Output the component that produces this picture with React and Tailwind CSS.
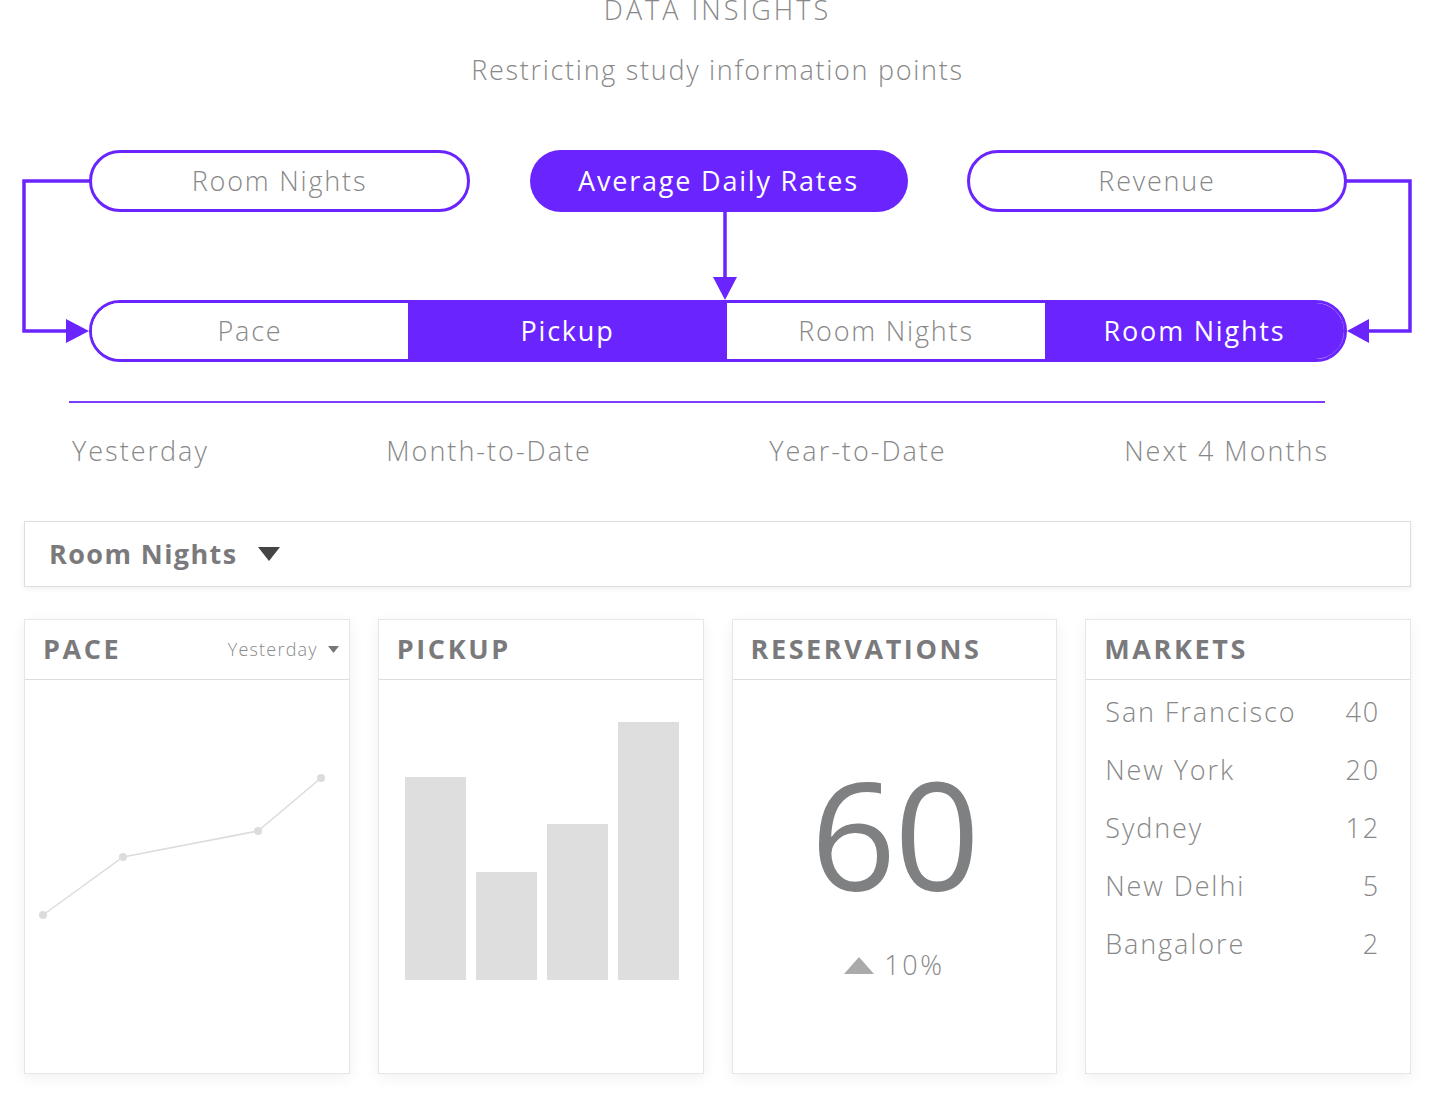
import React from 'react';

const PURPLE = '#6a24fe';

const markets = [
  { name: 'San Francisco', value: 40 },
  { name: 'New York', value: 20 },
  { name: 'Sydney', value: 12 },
  { name: 'New Delhi', value: 5 },
  { name: 'Bangalore', value: 2 },
];

const bars = [
  { h: 203 },
  { h: 108 },
  { h: 156 },
  { h: 258 },
];

const Card = ({ title, right, children }) => (
  <div className="h-[455px] bg-white border border-[#e6e6ea] shadow-[0_4px_14px_rgba(0,0,0,0.06)] flex flex-col">
    <div className="h-[60px] shrink-0 border-b border-[#dcdce0] flex items-center justify-between pl-[18px] pr-[10px]">
      <span className="text-[27px] font-bold tracking-[2.6px] text-[#7a7a7c]">{title}</span>
      {right}
    </div>
    <div className="flex-1 relative">{children}</div>
  </div>
);

export default function App() {
  return (
    <div
      className="relative w-[1435px] h-[1100px] overflow-hidden bg-white text-[#888888]"
      style={{ fontFamily: '"Open Sans", Lato, sans-serif' }}
    >
      {/* En-tête */}
      <div className="flex flex-col items-center -mt-[8px]">
        <h1 className="text-[27px] font-light leading-[36px] tracking-[3px]">DATA INSIGHTS</h1>
        <p className="mt-[24px] text-[27px] font-light leading-[36px] tracking-[1.7px]">Restricting study information points</p>
      </div>

      {/* Diagramme */}
      <div className="relative mt-[60px] h-[218px]">
        <svg className="absolute inset-0" width="1435" height="218" viewBox="0 0 1435 218">
          <g fill="none" stroke={PURPLE} strokeWidth="3.5">
            <polyline points="90,33 24,33 24,183 70,183" />
            <line x1="725" y1="64" x2="725" y2="132" />
            <polyline points="1346,33 1410,33 1410,183 1366,183" />
          </g>
          <polygon points="66,171 66,195 89,183" fill={PURPLE} />
          <polygon points="713,129 737,129 725,152" fill={PURPLE} />
          <polygon points="1369,171 1369,195 1347,183" fill={PURPLE} />
        </svg>

        <div className="relative flex justify-between pl-[89px] pr-[88px] pt-[2px] tracking-[1.8px]">
          <div className="w-[381px] h-[62px] rounded-full border-[3.5px] border-[#6a24fe] bg-white flex items-center justify-center text-[27px] font-light text-[#888]">
            Room Nights
          </div>
          <div className="w-[378px] h-[62px] rounded-full bg-[#6a24fe] flex items-center justify-center text-[27px] font-normal text-white">
            Average Daily Rates
          </div>
          <div className="w-[380px] h-[62px] rounded-full border-[3.5px] border-[#6a24fe] bg-white flex items-center justify-center text-[27px] font-light text-[#888]">
            Revenue
          </div>
        </div>

        <div className="relative ml-[89px] mt-[88px] w-[1258px] h-[62px] rounded-full border-[3.5px] border-[#6a24fe] overflow-hidden grid grid-cols-[316px_319px_318px_1fr] text-[27px] tracking-[1.8px]">
          <div className="bg-white flex items-center justify-center font-light text-[#888]">Pace</div>
          <div className="bg-[#6a24fe] flex items-center justify-center text-white">Pickup</div>
          <div className="bg-white flex items-center justify-center font-light text-[#888]">Room Nights</div>
          <div className="bg-[#6a24fe] flex items-center justify-center text-white">Room Nights</div>
        </div>
      </div>

      {/* Périodes */}
      <div className="ml-[69px] mt-[35px] w-[1256px] h-[2px] bg-[#7b3cff]" />
      <div className="flex justify-between pl-[72px] pr-[106px] mt-[30px] text-[27px] font-light leading-[36px] tracking-[2px]">
        <span>Yesterday</span>
        <span>Month-to-Date</span>
        <span>Year-to-Date</span>
        <span>Next 4 Months</span>
      </div>

      {/* Sélecteur */}
      <div className="mx-[24px] mt-[52px] h-[66px] border border-[#dedee2] shadow-[0_2px_6px_rgba(0,0,0,0.06)] flex items-center pl-[24px] gap-[20px]">
        <span className="text-[27px] font-bold text-[#7a7a7c] tracking-[1.4px]">Room Nights</span>
        <svg width="22" height="14" viewBox="0 0 22 14">
          <polygon points="0,0 22,0 11,14" fill="#444" />
        </svg>
      </div>

      {/* Cartes */}
      <div className="mx-[24px] mt-[32px] grid grid-cols-4 gap-[28px]">
        <Card
          title="PACE"
          right={
            <span className="flex items-center gap-[10px] text-[18px] font-light text-[#888] tracking-[1.2px]">
              Yesterday
              <svg width="11" height="7" viewBox="0 0 11 7">
                <polygon points="0,0 11,0 5.5,7" fill="#777" />
              </svg>
            </span>
          }
        >
          <svg className="absolute inset-0" width="326" height="394" viewBox="0 0 326 394">
            <polyline points="18,235 98,177 233,151 296,98" fill="none" stroke="#dcdcdc" strokeWidth="1.5" />
            {[[18, 235], [98, 177], [233, 151], [296, 98]].map(([x, y]) => (
              <circle key={x} cx={x} cy={y} r="4" fill="#dcdcdc" />
            ))}
          </svg>
        </Card>

        <Card title="PICKUP">
          <div className="absolute left-[26px] right-[24px] top-[42px] h-[258px] flex items-end gap-[10px]">
            {bars.map((b, i) => (
              <div key={i} className="flex-1 bg-[#dedede]" style={{ height: b.h }} />
            ))}
          </div>
        </Card>

        <Card title="RESERVATIONS">
          <div className="flex flex-col items-center pt-[78px]">
            <span className="text-[150px] leading-[150px] font-normal text-[#7f8082] tracking-[-2px]">60</span>
            <span className="mt-[37px] flex items-center gap-[10px] text-[27px] font-light tracking-[2.5px]">
              <svg width="30" height="17" viewBox="0 0 30 17">
                <polygon points="0,17 30,17 15,0" fill="#aaa" />
              </svg>
              10%
            </span>
          </div>
        </Card>

        <Card title="MARKETS">
          <div className="pl-[19px] pr-[30px] pt-[14px] flex flex-col gap-[22px]">
            {markets.map((m) => (
              <div key={m.name} className="flex justify-between text-[27px] font-light leading-[36px] tracking-[1.9px]">
                <span>{m.name}</span>
                <span>{m.value}</span>
              </div>
            ))}
          </div>
        </Card>
      </div>
    </div>
  );
}
